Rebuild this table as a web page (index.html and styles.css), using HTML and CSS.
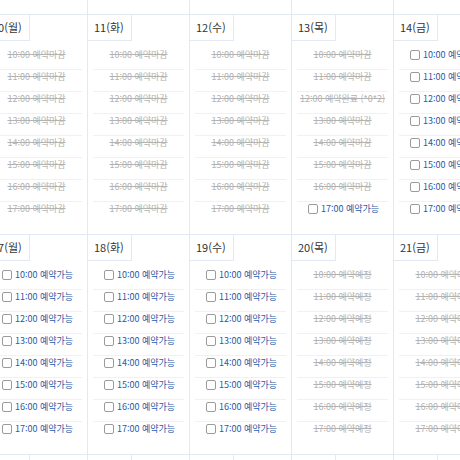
FILE: index.html
```html
<!DOCTYPE html>
<html lang="ko">
<head>
<meta charset="utf-8">
<title>예약 달력</title>
<link rel="stylesheet" href="styles.css">
</head>
<body>
<div class="calendar">
  <!-- week 3-7 (scrolled above) -->
  <div class="day"><div class="date">3(월)</div><ul class="slots">
    <li class="slot closed"><s>10:00 예약마감</s></li><li class="slot closed"><s>11:00 예약마감</s></li><li class="slot closed"><s>12:00 예약마감</s></li><li class="slot closed"><s>13:00 예약마감</s></li><li class="slot closed"><s>14:00 예약마감</s></li><li class="slot closed"><s>15:00 예약마감</s></li><li class="slot closed"><s>16:00 예약마감</s></li><li class="slot closed"><s>17:00 예약마감</s></li></ul></div>
  <div class="day"><div class="date">4(화)</div><ul class="slots">
    <li class="slot closed"><s>10:00 예약마감</s></li><li class="slot closed"><s>11:00 예약마감</s></li><li class="slot closed"><s>12:00 예약마감</s></li><li class="slot closed"><s>13:00 예약마감</s></li><li class="slot closed"><s>14:00 예약마감</s></li><li class="slot closed"><s>15:00 예약마감</s></li><li class="slot closed"><s>16:00 예약마감</s></li><li class="slot closed"><s>17:00 예약마감</s></li></ul></div>
  <div class="day"><div class="date">5(수)</div><ul class="slots">
    <li class="slot closed"><s>10:00 예약마감</s></li><li class="slot closed"><s>11:00 예약마감</s></li><li class="slot closed"><s>12:00 예약마감</s></li><li class="slot closed"><s>13:00 예약마감</s></li><li class="slot closed"><s>14:00 예약마감</s></li><li class="slot closed"><s>15:00 예약마감</s></li><li class="slot closed"><s>16:00 예약마감</s></li><li class="slot closed"><s>17:00 예약마감</s></li></ul></div>
  <div class="day"><div class="date">6(목)</div><ul class="slots">
    <li class="slot closed"><s>10:00 예약마감</s></li><li class="slot closed"><s>11:00 예약마감</s></li><li class="slot closed"><s>12:00 예약마감</s></li><li class="slot closed"><s>13:00 예약마감</s></li><li class="slot closed"><s>14:00 예약마감</s></li><li class="slot closed"><s>15:00 예약마감</s></li><li class="slot closed"><s>16:00 예약마감</s></li><li class="slot closed"><s>17:00 예약마감</s></li></ul></div>
  <div class="day"><div class="date">7(금)</div><ul class="slots">
    <li class="slot closed"><s>10:00 예약마감</s></li><li class="slot closed"><s>11:00 예약마감</s></li><li class="slot closed"><s>12:00 예약마감</s></li><li class="slot closed"><s>13:00 예약마감</s></li><li class="slot closed"><s>14:00 예약마감</s></li><li class="slot closed"><s>15:00 예약마감</s></li><li class="slot closed"><s>16:00 예약마감</s></li><li class="slot closed"><s>17:00 예약마감</s></li></ul></div>

  <!-- week 10-14 -->
  <div class="day"><div class="date">10(월)</div><ul class="slots">
    <li class="slot closed"><s>10:00 예약마감</s></li><li class="slot closed"><s>11:00 예약마감</s></li><li class="slot closed"><s>12:00 예약마감</s></li><li class="slot closed"><s>13:00 예약마감</s></li><li class="slot closed"><s>14:00 예약마감</s></li><li class="slot closed"><s>15:00 예약마감</s></li><li class="slot closed"><s>16:00 예약마감</s></li><li class="slot closed"><s>17:00 예약마감</s></li></ul></div>
  <div class="day"><div class="date">11(화)</div><ul class="slots">
    <li class="slot closed"><s>10:00 예약마감</s></li><li class="slot closed"><s>11:00 예약마감</s></li><li class="slot closed"><s>12:00 예약마감</s></li><li class="slot closed"><s>13:00 예약마감</s></li><li class="slot closed"><s>14:00 예약마감</s></li><li class="slot closed"><s>15:00 예약마감</s></li><li class="slot closed"><s>16:00 예약마감</s></li><li class="slot closed"><s>17:00 예약마감</s></li></ul></div>
  <div class="day"><div class="date">12(수)</div><ul class="slots">
    <li class="slot closed"><s>10:00 예약마감</s></li><li class="slot closed"><s>11:00 예약마감</s></li><li class="slot closed"><s>12:00 예약마감</s></li><li class="slot closed"><s>13:00 예약마감</s></li><li class="slot closed"><s>14:00 예약마감</s></li><li class="slot closed"><s>15:00 예약마감</s></li><li class="slot closed"><s>16:00 예약마감</s></li><li class="slot closed"><s>17:00 예약마감</s></li></ul></div>
  <div class="day"><div class="date">13(목)</div><ul class="slots">
    <li class="slot closed"><s>10:00 예약마감</s></li><li class="slot closed"><s>11:00 예약마감</s></li><li class="slot closed"><s>12:00 예약완료 (*0*2)</s></li><li class="slot closed"><s>13:00 예약마감</s></li><li class="slot closed"><s>14:00 예약마감</s></li><li class="slot closed"><s>15:00 예약마감</s></li><li class="slot closed"><s>16:00 예약마감</s></li>
    <li class="slot open"><span class="box"></span>17:00 예약가능</li></ul></div>
  <div class="day"><div class="date">14(금)</div><ul class="slots">
    <li class="slot open"><span class="box"></span>10:00 예약가능</li><li class="slot open"><span class="box"></span>11:00 예약가능</li><li class="slot open"><span class="box"></span>12:00 예약가능</li><li class="slot open"><span class="box"></span>13:00 예약가능</li><li class="slot open"><span class="box"></span>14:00 예약가능</li><li class="slot open"><span class="box"></span>15:00 예약가능</li><li class="slot open"><span class="box"></span>16:00 예약가능</li><li class="slot open"><span class="box"></span>17:00 예약가능</li></ul></div>

  <!-- week 17-21 -->
  <div class="day"><div class="date">17(월)</div><ul class="slots">
    <li class="slot open"><span class="box"></span>10:00 예약가능</li><li class="slot open"><span class="box"></span>11:00 예약가능</li><li class="slot open"><span class="box"></span>12:00 예약가능</li><li class="slot open"><span class="box"></span>13:00 예약가능</li><li class="slot open"><span class="box"></span>14:00 예약가능</li><li class="slot open"><span class="box"></span>15:00 예약가능</li><li class="slot open"><span class="box"></span>16:00 예약가능</li><li class="slot open"><span class="box"></span>17:00 예약가능</li></ul></div>
  <div class="day"><div class="date">18(화)</div><ul class="slots">
    <li class="slot open"><span class="box"></span>10:00 예약가능</li><li class="slot open"><span class="box"></span>11:00 예약가능</li><li class="slot open"><span class="box"></span>12:00 예약가능</li><li class="slot open"><span class="box"></span>13:00 예약가능</li><li class="slot open"><span class="box"></span>14:00 예약가능</li><li class="slot open"><span class="box"></span>15:00 예약가능</li><li class="slot open"><span class="box"></span>16:00 예약가능</li><li class="slot open"><span class="box"></span>17:00 예약가능</li></ul></div>
  <div class="day"><div class="date">19(수)</div><ul class="slots">
    <li class="slot open"><span class="box"></span>10:00 예약가능</li><li class="slot open"><span class="box"></span>11:00 예약가능</li><li class="slot open"><span class="box"></span>12:00 예약가능</li><li class="slot open"><span class="box"></span>13:00 예약가능</li><li class="slot open"><span class="box"></span>14:00 예약가능</li><li class="slot open"><span class="box"></span>15:00 예약가능</li><li class="slot open"><span class="box"></span>16:00 예약가능</li><li class="slot open"><span class="box"></span>17:00 예약가능</li></ul></div>
  <div class="day"><div class="date">20(목)</div><ul class="slots">
    <li class="slot closed"><s>10:00 예약예정</s></li><li class="slot closed"><s>11:00 예약예정</s></li><li class="slot closed"><s>12:00 예약예정</s></li><li class="slot closed"><s>13:00 예약예정</s></li><li class="slot closed"><s>14:00 예약예정</s></li><li class="slot closed"><s>15:00 예약예정</s></li><li class="slot closed"><s>16:00 예약예정</s></li><li class="slot closed"><s>17:00 예약예정</s></li></ul></div>
  <div class="day"><div class="date">21(금)</div><ul class="slots">
    <li class="slot closed"><s>10:00 예약예정</s></li><li class="slot closed"><s>11:00 예약예정</s></li><li class="slot closed"><s>12:00 예약예정</s></li><li class="slot closed"><s>13:00 예약예정</s></li><li class="slot closed"><s>14:00 예약예정</s></li><li class="slot closed"><s>15:00 예약예정</s></li><li class="slot closed"><s>16:00 예약예정</s></li><li class="slot closed"><s>17:00 예약예정</s></li></ul></div>

  <!-- week 24-28 -->
  <div class="day"><div class="date">24(월)</div></div>
  <div class="day"><div class="date">25(화)</div></div>
  <div class="day"><div class="date">26(수)</div></div>
  <div class="day"><div class="date">27(목)</div></div>
  <div class="day"><div class="date">28(금)</div></div>
</div>
</body>
</html>
```

FILE: styles.css
```css
html, body {
  margin: 0;
  background: #ffffff;
  overflow: hidden;
}
body {
  font-family: "Noto Sans CJK KR", "Noto Sans", sans-serif;
  width: 460px;
  height: 460px;
}
.calendar {
  display: grid;
  grid-template-columns: repeat(5, 102px);
  width: 510px;
  margin: -206px 0 0 -15px;
}
.day {
  border-left: 1px solid #e3e9f2;
  border-top: 1px solid #e3e9f2;
  padding-bottom: 11px;
  min-height: 208px;
}
.date {
  box-sizing: border-box;
  width: 44px;
  height: 26px;
  padding-left: 6px;
  line-height: 25px;
  font-size: 11px;
  color: #333333;
  border-right: 1px solid #e3e9f2;
  border-bottom: 1px solid #e3e9f2;
  white-space: nowrap;
}
.slots {
  list-style: none;
  margin: 6px 0 0 0;
  padding: 0 5px;
}
.slot {
  box-sizing: border-box;
  height: 22px;
  padding-top: 1px;
  line-height: 12px;
  font-size: 9px;
  border-top: 1px solid #eef1f5;
  white-space: nowrap;
}
.slot:first-child {
  border-top-color: transparent;
}
.closed {
  text-align: center;
  color: #b3b3b3;
}
.closed s {
  text-decoration: line-through;
}
.open {
  display: flex;
  align-items: flex-start;
  padding-left: 11px;
  color: #2a59a8;
}
.box {
  box-sizing: border-box;
  width: 10px;
  height: 10px;
  margin: 1px 3px 0 0;
  border: 1px solid #9b9b9b;
  border-radius: 2px;
  background: #ffffff;
  flex: none;
}
```
